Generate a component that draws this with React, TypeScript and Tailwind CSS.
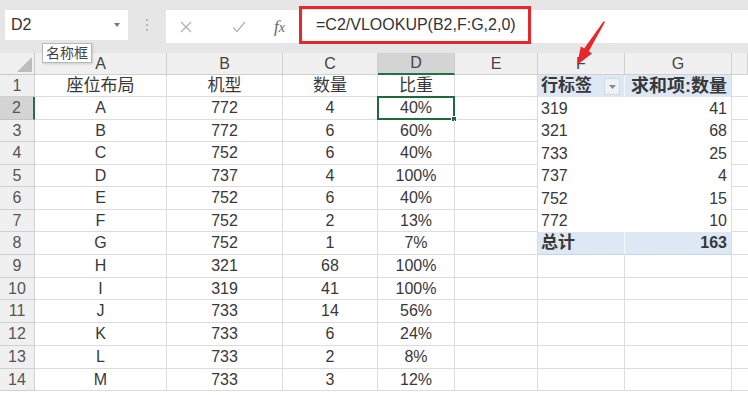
import React from "react";

const W = [
  "w-[35px]",
  "w-[132px]",
  "w-[116px]",
  "w-[95px]",
  "w-[77px]",
  "w-[83px]",
  "w-[87px]",
  "w-[107px]",
  "w-[16px]",
];

const H = [
  "h-[22px]",
  "h-[23px]",
  "h-[22px]",
  "h-[23px]",
  "h-[22px]",
  "h-[23px]",
  "h-[22px]",
  "h-[23px]",
  "h-[23px]",
  "h-[22px]",
  "h-[23px]",
  "h-[23px]",
  "h-[23px]",
  "h-[22px]",
];

const rows: string[][] = [
  ["座位布局", "机型", "数量", "比重"],
  ["A", "772", "4", "40%"],
  ["B", "772", "6", "60%"],
  ["C", "752", "6", "40%"],
  ["D", "737", "4", "100%"],
  ["E", "752", "6", "40%"],
  ["F", "752", "2", "13%"],
  ["G", "752", "1", "7%"],
  ["H", "321", "68", "100%"],
  ["I", "319", "41", "100%"],
  ["J", "733", "14", "56%"],
  ["K", "733", "6", "24%"],
  ["L", "733", "2", "8%"],
  ["M", "733", "3", "12%"],
];

const pivot: [string, string][] = [
  ["319", "41"],
  ["321", "68"],
  ["733", "25"],
  ["737", "4"],
  ["752", "15"],
  ["772", "10"],
];

const grid = "border-r border-b border-[#dcdcdc]";

function Row({ i }: { i: number }) {
  const r = rows[i];
  const n = i + 1;
  const selected = n === 2;
  const header = n === 1;
  const pv = n >= 2 && n <= 7 ? pivot[n - 2] : null;
  const blue = n === 1 || n === 8;

  return (
    <div className={`flex ${H[i]}`}>
      <div
        className={`${W[0]} flex shrink-0 items-center justify-center border-b text-[16px] text-[#555] ${
          selected
            ? "border-r-2 border-r-[#217346] border-b-[#c4c4c4] bg-[#d4d4d4]"
            : "border-r border-[#d0d0d0] bg-[#f0f0f0]"
        }`}
      >
        {n}
      </div>
      <div className={`${W[1]} ${grid} flex shrink-0 items-center justify-center ${header ? "text-[17px]" : ""}`}>{r[0]}</div>
      <div className={`${W[2]} ${grid} flex shrink-0 items-center justify-center ${header ? "text-[17px]" : ""}`}>{r[1]}</div>
      <div className={`${W[3]} ${grid} flex shrink-0 items-center justify-center ${header ? "text-[17px]" : ""}`}>{r[2]}</div>
      <div className={`${W[4]} ${grid} relative flex shrink-0 items-center justify-center ${header ? "text-[17px]" : ""}`}>
        {selected && (
          <div className="absolute -top-px -left-px -right-px -bottom-px border-2 border-[#1d6a3f]">
            <div className="absolute -right-[4px] -bottom-[4px] h-[6px] w-[6px] border border-white bg-[#1d6a3f]" />
          </div>
        )}
        <span className="relative">{r[3]}</span>
      </div>
      <div className={`${W[5]} ${grid} shrink-0`} />
      {blue ? (
        <>
          <div className={`${W[6]} relative flex shrink-0 items-center bg-[#dde8f4] pl-[3px] font-bold text-[17px] ${n === 8 ? "border-b border-[#c6d6ea]" : ""} border-r border-r-white/70`}>
            {n === 1 ? "行标签" : "总计"}
            {n === 1 && (
              <div className="absolute right-[4px] top-[3px] flex h-[17px] w-[16px] items-center justify-center border border-[#cfd8e2] bg-[#eef2f6]">
                <svg width="7" height="4" viewBox="0 0 7 4">
                  <path d="M0 0h7L3.5 4z" fill="#8a8a8a" />
                </svg>
              </div>
            )}
          </div>
          <div className={`${W[7]} flex shrink-0 items-center justify-end bg-[#dde8f4] pr-[4px] font-bold ${n === 1 ? "text-[18px]" : "text-[16px]"} border-r border-[#dcdcdc] ${n === 8 ? "border-b border-b-[#c6d6ea]" : ""}`}>
            {n === 1 ? "求和项:数量" : "163"}
          </div>
        </>
      ) : pv ? (
        <>
          <div className={`${W[6]} flex shrink-0 items-center bg-white pl-[3px]`}>{pv[0]}</div>
          <div className={`${W[7]} flex shrink-0 items-center justify-end border-r border-[#dcdcdc] bg-white pr-[4px]`}>{pv[1]}</div>
        </>
      ) : (
        <>
          <div className={`${W[6]} ${grid} shrink-0`} />
          <div className={`${W[7]} ${grid} shrink-0`} />
        </>
      )}
      <div className={`${W[8]} shrink-0 border-b border-[#dcdcdc]`} />
    </div>
  );
}

export default function App() {
  const letters = ["A", "B", "C", "D", "E", "F", "G", ""];
  return (
    <div className="relative h-[395px] w-[748px] overflow-hidden bg-white font-['Liberation_Sans','Noto_Sans_CJK_SC',sans-serif] text-[16px] text-[#383838]">
      {/* formula bar */}
      <div className="flex h-[53px] items-start bg-[#e6e6e6] pt-[10px] pl-[5px]">
        <div className="flex h-[30px] w-[123px] items-center justify-between bg-white pr-[8px] pl-[6px] text-[16px] text-[#333]">
          <span>D2</span>
          <svg width="6" height="4" viewBox="0 0 6 4">
            <path d="M0 0h6L3 4z" fill="#777" />
          </svg>
        </div>
        <div className="flex h-[30px] w-[38px] flex-col items-center justify-center gap-[3px]">
          <span className="h-[2px] w-[2px] rounded-full bg-[#a8a8a8]" />
          <span className="h-[2px] w-[2px] rounded-full bg-[#a8a8a8]" />
          <span className="h-[2px] w-[2px] rounded-full bg-[#a8a8a8]" />
        </div>
        <div className="flex h-[33px] flex-1 items-center bg-white">
          <div className="flex w-[132px] items-center">
            <svg className="ml-[14px]" width="12" height="12" viewBox="0 0 12 12">
              <path d="M1 1l10 10M11 1L1 11" stroke="#b5b5b5" strokeWidth="1.4" />
            </svg>
            <svg className="ml-[40px]" width="14" height="12" viewBox="0 0 14 12">
              <path d="M1 6.5l4 4L13 1" stroke="#b5b5b5" strokeWidth="1.4" fill="none" />
            </svg>
            <span className="ml-[28px] font-['Liberation_Serif',serif] text-[17px] italic text-[#666]">
              f<span className="text-[14px]">x</span>
            </span>
          </div>
          <div className="ml-[1px] flex h-[38px] w-[232px] -translate-y-[2px] items-center border-[3px] border-[#e8262b] pl-[14px] text-[16px] text-[#333]">
            =C2/VLOOKUP(B2,F:G,2,0)
          </div>
        </div>
      </div>

      {/* column headers */}
      <div className="flex h-[22px]">
        <div className={`${W[0]} relative shrink-0 border-r border-b border-[#c8c8c8] bg-[#f0f0f0]`}>
          <svg className="absolute right-[2px] bottom-[2px]" width="15" height="15" viewBox="0 0 15 15">
            <path d="M15 0V15H0z" fill="#bdbdbd" />
          </svg>
        </div>
        {letters.map((l, i) => (
          <div
            key={i}
            className={`${W[i + 1]} flex shrink-0 items-center justify-center border-r text-[16px] text-[#444] ${
              l === "D"
                ? "border-b-2 border-r-[#c8c8c8] border-b-[#217346] bg-[#d4d4d4]"
                : "border-b border-[#d0d0d0] bg-[#f0f0f0]"
            }`}
          >
            {l}
          </div>
        ))}
      </div>

      {rows.map((_, i) => (
        <Row key={i} i={i} />
      ))}

      {/* name box tooltip */}
      <div className="absolute top-[43px] left-[42px] flex h-[20px] items-center border border-[#b8b8b8] bg-white px-[3px] text-[14px] leading-none text-[#444] shadow-[1px_1px_2px_rgba(0,0,0,0.15)]">
        名称框
      </div>

      {/* arrow */}
      <svg className="absolute top-[18px] left-[560px]" width="50" height="50" viewBox="0 0 50 50">
        <path
          d="M45 4 L28.8 33.3 L32 35.4 L17 47 L20.8 28.4 L24.2 30.4 L43.6 3.2 Z"
          fill="#e8262b"
        />
      </svg>
    </div>
  );
}
